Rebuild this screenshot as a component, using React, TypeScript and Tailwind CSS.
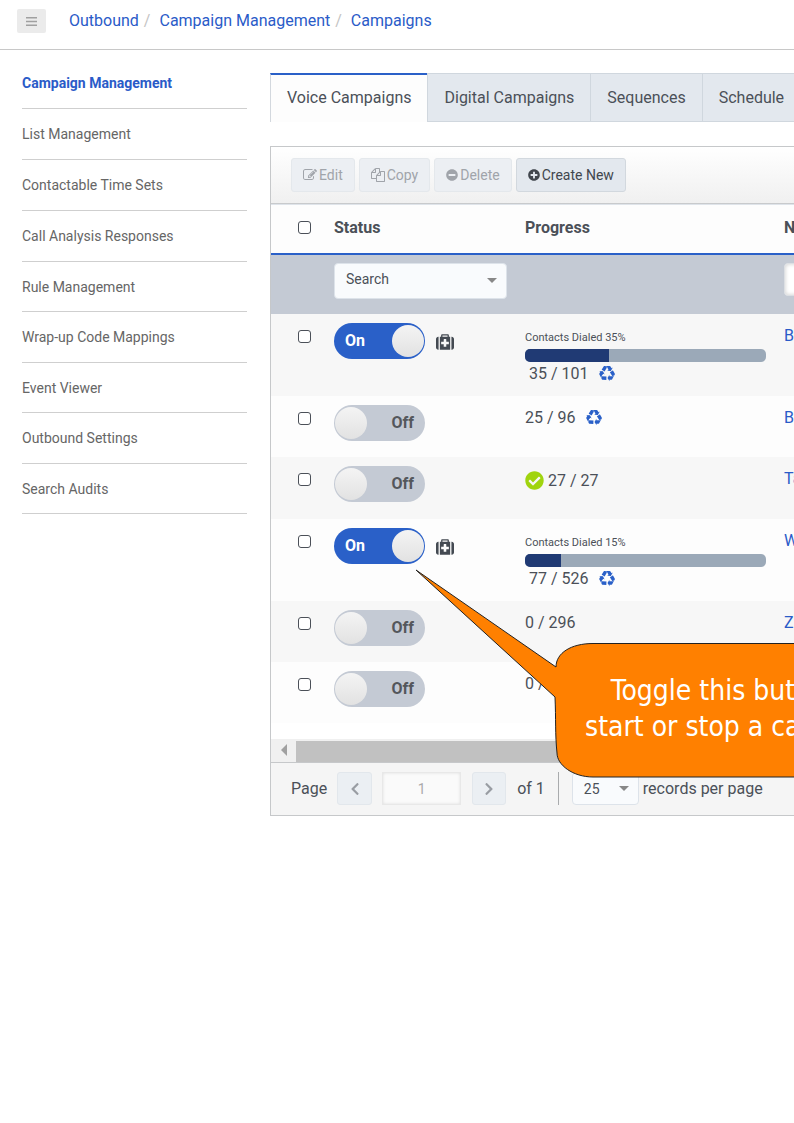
import { useState } from "react";
import {
  FaCheckCircle,
  FaChevronLeft,
  FaChevronRight,
  FaMinusCircle,
  FaPlusCircle,
} from "react-icons/fa";

function EditIcon() {
  return (
    <svg viewBox="0 0 1792 1792" className="size-3.5 shrink-0" fill="currentColor" aria-hidden="true">
      <path d="M888 1184l116-116-152-152-116 116v56h96v96h56zm440-720q-16-16-33 1l-350 350q-17 17-1 33t33-1l350-350q17-17 1-33zm80 594v190q0 119-84.5 203.5t-203.5 84.5h-832q-119 0-203.5-84.5t-84.5-203.5v-832q0-119 84.5-203.5t203.5-84.5h832q63 0 117 25 15 7 18 23 3 17-9 29l-49 49q-14 14-32 8-23-6-45-6h-832q-66 0-113 47t-47 113v832q0 66 47 113t113 47h832q66 0 113-47t47-113v-126q0-13 9-22l64-64q15-15 35-7t20 29zm-96-738l288 288-672 672h-288v-288zm444 132l-92 92-288-288 92-92q28-28 68-28t68 28l152 152q28 28 28 68t-28 68z" />
    </svg>
  );
}

function CopyIcon() {
  return (
    <svg viewBox="0 0 1792 1792" className="size-3.5 shrink-0" fill="currentColor" aria-hidden="true">
      <path d="M1696 384q40 0 68 28t28 68v1216q0 40-28 68t-68 28h-960q-40 0-68-28t-28-68v-288h-544q-40 0-68-28t-28-68v-672q0-40 20-88t48-76l408-408q28-28 76-48t88-20h416q40 0 68 28t28 68v328q68-40 128-40h416zm-544 213l-299 299h299v-299zm-640-384l-299 299h299v-299zm196 647l316-316v-416h-384v416q0 40-28 68t-68 28h-416v640h512v-256q0-40 20-88t48-76zm956 804v-1152h-384v416q0 40-28 68t-68 28h-416v640h896z" />
    </svg>
  );
}

function MedkitIcon() {
  return (
    <svg viewBox="0 0 1792 1792" className="mt-0.5 size-[18px] text-[#444a52]" fill="currentColor" aria-hidden="true">
      <path d="M1280 1088v-192q0-14-9-23t-23-9h-224v-224q0-14-9-23t-23-9h-192q-14 0-23 9t-9 23v224h-224q-14 0-23 9t-9 23v192q0 14 9 23t23 9h224v224q0 14 9 23t23 9h192q14 0 23-9t9-23v-224h224q14 0 23-9t9-23zm-640-704h512v-128h-512v128zm-384 0v1280h-32q-92 0-158-66t-66-158v-832q0-92 66-158t158-66h32zm1152 0v1280h-1024v-1280h128v-160q0-40 28-68t68-28h576q40 0 68 28t28 68v160h128zm384 224v832q0 92-66 158t-158 66h-32v-1280h32q92 0 158 66t66 158z" />
    </svg>
  );
}

function RecycleIcon() {
  return (
    <svg viewBox="0 0 1792 1792" className="size-4 text-[#2a60c8]" fill="currentColor" aria-hidden="true">
      <path d="M836 1169l-15 368-2 22-420-29q-36-3-67-31.5t-47-65.5q-11-27-14.5-55t4-65 12-55 21.5-64 19-53q78 12 509 28zm-387-586l180 379-147-92q-63 72-111.5 144.5t-72.5 125-39.5 94.5-18.5 63l-4 21-190-357q-17-26-18-56t6-47l8-18q35-63 114-188l-140-86zm1231 517l-188 359q-12 29-36.5 46.5t-43.5 20.5l-18 4q-71 7-219 12l8 164-230-367 211-362 7 173q170 16 283 5t170-33zm-785-924q-47 63-265 435l-317-187-19-12 225-356q20-31 60-45t80-10q24 2 48.5 12t42 21 41.5 33 36 34.5 36 39.5 32 35zm655 307l212 363q18 37 12.5 76t-27.5 74q-13 20-33 37t-38 28-48.5 22-47 16-51.5 14-46 12q-34-72-265-436l313-195zm-143-226l142-83-220 373-419-20 151-86q-34-89-75-166t-75.5-123.5-64.5-80-47-46.5l-17-13 405 1q31-3 58 10.5t39 28.5l11 15q39 61 112 190z" />
    </svg>
  );
}

const sideLinks = [
  "Campaign Management",
  "List Management",
  "Contactable Time Sets",
  "Call Analysis Responses",
  "Rule Management",
  "Wrap-up Code Mappings",
  "Event Viewer",
  "Outbound Settings",
  "Search Audits",
];

const tabs = ["Voice Campaigns", "Digital Campaigns", "Sequences", "Schedule"];

type Campaign = {
  on: boolean;
  percent?: number;
  count: string;
  recycle?: boolean;
  done?: boolean;
  name?: string;
};

const campaigns: Campaign[] = [
  { on: true, percent: 35, count: "35 / 101", recycle: true, name: "B" },
  { on: false, count: "25 / 96", recycle: true, name: "B" },
  { on: false, count: "27 / 27", done: true, name: "Ta" },
  { on: true, percent: 15, count: "77 / 526", recycle: true, name: "W" },
  { on: false, count: "0 / 296", name: "Z" },
  { on: false, count: "0 / 1" },
];

function rowHeight(c: Campaign) {
  if (c.percent !== undefined) return "h-[82px]";
  return c.done ? "h-[62px]" : "h-[61px]";
}

function Check({ label }: { label: string }) {
  return (
    <input
      type="checkbox"
      aria-label={label}
      className="block size-[13px] appearance-none rounded-[3px] border border-[#4b5058] bg-white checked:bg-[#2a60c8]"
    />
  );
}

function Toggle({ initial, label }: { initial: boolean; label: string }) {
  const [on, setOn] = useState(initial);
  return (
    <button
      type="button"
      role="switch"
      aria-checked={on}
      aria-label={label}
      onClick={() => setOn(!on)}
      className={
        on
          ? "flex h-9 w-[91px] items-center justify-between rounded-full bg-[#2a60c8] pr-px pl-[11px] text-base font-bold text-white"
          : "flex h-9 w-[91px] flex-row-reverse items-center justify-between rounded-full bg-[#c4cad4] pr-[11px] pl-px text-base font-bold text-[#54575c]"
      }
    >
      <span>{on ? "On" : "Off"}</span>
      <span className="size-8 rounded-full bg-linear-to-b from-[#f4f4f4] to-[#e2e2e2]" />
    </button>
  );
}

function Arrow() {
  return (
    <svg viewBox="0 0 10 5" className="pointer-events-none col-start-1 row-start-1 mr-[10px] h-[5px] w-[10px] self-center justify-self-end" aria-hidden="true">
      <path d="M0 0h10L5 5z" fill="#888" />
    </svg>
  );
}

function Progress({ row }: { row: Campaign }) {
  if (row.percent !== undefined) {
    return (
      <div className="pt-4">
        <div className="text-[11px] leading-4">Contacts Dialed {row.percent}%</div>
        <div className="mt-[3px] h-[13px] w-[241px] overflow-hidden rounded-[5px] bg-[#9ba9b8]">
          <div className="h-full bg-[#203a74]" style={{ width: `${row.percent}%` }} />
        </div>
        <div className="flex items-center gap-2.5 pl-1 leading-6">
          <span>{row.count}</span>
          <RecycleIcon />
        </div>
      </div>
    );
  }
  return (
    <div className={row.done ? "flex items-center gap-1 pt-3 leading-6" : "flex items-center gap-2.5 pt-2.5 leading-6"}>
      {row.done && <FaCheckCircle className="size-[19px] text-[#a0d40e]" />}
      <span>{row.count}</span>
      {row.recycle && <RecycleIcon />}
    </div>
  );
}

export default function App() {
  const toolButton = "flex h-[34px] items-center gap-0.5 rounded-[3px] border px-[11px] text-sm";
  const disabledTool = `${toolButton} border-[#e4e8ec] bg-[#eceff3] text-[#a0a4aa]`;
  return (
    <div className="relative min-h-screen overflow-hidden bg-white font-[Roboto,sans-serif] text-base text-[#4b5058]">
      <header className="flex h-[50px] items-start border-b border-[#c8c8c8] px-[17px] pt-[9px]">
        <button type="button" aria-label="Menu" className="flex h-6 w-[29px] items-center justify-center rounded-[2px] bg-[#ebebeb]">
          <svg viewBox="0 0 11 9" className="h-[9px] w-[11px]" fill="#a0a0a0" aria-hidden="true">
            <path d="M0 0h11v1.6H0zM0 3.7h11v1.6H0zM0 7.4h11v1.6H0z" />
          </svg>
        </button>
        <nav aria-label="Breadcrumb" className="ml-[23px] flex whitespace-nowrap text-[#2a5bc8]">
          <a href="#outbound">Outbound</a>
          <span className="mr-[9px] ml-[5px] text-[#c4c4c4]">/</span>
          <a href="#management">Campaign Management</a>
          <span className="mr-[9px] ml-[5px] text-[#c4c4c4]">/</span>
          <a href="#campaigns">Campaigns</a>
        </nav>
      </header>

      <div className="flex">
        <nav aria-label="Outbound" className="ml-[22px] w-[225px] shrink-0 pt-2">
          <ul>
            {sideLinks.map((l, i) => (
              <li key={l} className="flex h-[51px] items-center border-b border-[#cfcfcf] nth-[2n+5]:h-[50px]">
                <a
                  href="#section"
                  className={i === 0 ? "text-sm font-bold text-[#2a5bc8]" : "text-sm text-[#666]"}
                >
                  {l}
                </a>
              </li>
            ))}
          </ul>
        </nav>

        <main className="ml-[23px] min-w-0 flex-1 pt-[23px]">
          <div role="tablist" className="flex h-[49px] whitespace-nowrap">
            {tabs.map((t, i) => (
              <button
                key={t}
                type="button"
                role="tab"
                aria-selected={i === 0}
                className={
                  i === 0
                    ? "shrink-0 border-t-2 border-l border-t-[#2a60c8] border-l-[#d3d8de] bg-[#fdfdfd] px-4 pb-0.5"
                    : "shrink-0 border-y border-l border-[#d0d7de] bg-[#e3e8ee] px-4"
                }
              >
                {t}
              </button>
            ))}
            <div className="flex-1 border-y border-[#d0d7de] bg-[#e3e8ee]" />
          </div>

          <section className="mt-6 border-y border-l border-[#c6c8ca]">
            <div className="flex h-[57px] items-center gap-1 border-b border-[#c8cacc] bg-linear-to-b from-white to-[#f0f0f0] pl-5 whitespace-nowrap">
              <button type="button" disabled className={disabledTool}>
                <EditIcon />
                Edit
              </button>
              <button type="button" disabled className={disabledTool}>
                <CopyIcon />
                Copy
              </button>
              <button type="button" disabled className={disabledTool}>
                <FaMinusCircle className="size-3" />
                Delete
              </button>
              <button type="button" className={`${toolButton} border-[#d2d8de] bg-[#e3e8ee] text-[#41464d]`}>
                <FaPlusCircle className="size-3" />
                Create New
              </button>
            </div>

            <div className="overflow-hidden pb-4">
              <table className="w-[900px] table-fixed border-collapse text-left">
                <colgroup>
                  <col className="w-[63px]" />
                  <col className="w-[191px]" />
                  <col className="w-[259px]" />
                  <col />
                </colgroup>
                <thead>
                  <tr className="h-[49px] border-t border-b-2 border-t-[#dfe4ea] border-b-[#2a60c8] bg-[#fdfdfd]">
                    <th className="pb-0.5 pl-[27px]"><Check label="Select all" /></th>
                    <th className="pb-0.5 font-bold">Status</th>
                    <th className="pb-0.5 font-bold">Progress</th>
                    <th className="pb-0.5 font-bold">Name</th>
                  </tr>
                  <tr className="h-[60px] bg-[#c4cad4] align-top">
                    <td />
                    <td className="pt-2">
                      <div className="grid w-[173px]">
                        <select aria-label="Filter by status" className="col-start-1 row-start-1 h-9 appearance-none rounded-[4px] border border-[#dde3ea] bg-[#f9fbfd] pb-1 pl-[11px] text-sm">
                          <option>Search</option>
                          <option>On</option>
                          <option>Off</option>
                        </select>
                        <Arrow />
                      </div>
                    </td>
                    <td />
                    <td className="pt-2">
                      <input type="text" aria-label="Filter by name" className="h-[33px] w-[172px] rounded-[4px] border border-[#dcdfe3] bg-white px-2 shadow-[inset_0_0_4px_#ccc]" />
                    </td>
                  </tr>
                </thead>
                <tbody>
                  {campaigns.map((c, i) => (
                    <tr key={i} className={`${rowHeight(c)} align-top odd:bg-[#f7f7f7] even:bg-[#fdfdfd]`}>
                      <td className="pt-4 pl-[27px]"><Check label={`Select campaign ${i + 1}`} /></td>
                      <td className="pt-[9px]">
                        <div className="flex items-center gap-[11px]">
                          <Toggle initial={c.on} label={`Campaign ${i + 1} status`} />
                          {c.on && <MedkitIcon />}
                        </div>
                      </td>
                      <td><Progress row={c} /></td>
                      <td className="pt-2.5 leading-6">
                        {c.name && <a href="#campaign" className="text-[#2a5bc8]">{c.name}</a>}
                      </td>
                    </tr>
                  ))}
                </tbody>
              </table>
            </div>

            <div className="flex h-[23px] bg-[#f0f0f0]">
              <button type="button" aria-label="Scroll left" className="flex w-[25px] items-center justify-center">
                <svg viewBox="0 0 6 12" className="h-3 w-1.5" fill="#a0a0a0" aria-hidden="true">
                  <path d="M6 0v12L0 6z" />
                </svg>
              </button>
              <div className="mt-0.5 flex-1 bg-[#c1c1c1]" />
            </div>

            <footer className="flex h-[53px] items-center border-t border-[#c6c8ca] bg-[#f5f5f5] pl-5 whitespace-nowrap">
              <label htmlFor="page">Page</label>
              <button type="button" aria-label="Previous page" disabled className="ml-2.5 flex h-[33px] w-[35px] items-center justify-center rounded-[3px] border border-[#e2e7ec] bg-[#ebeff3] text-[#999da3]">
                <FaChevronLeft className="size-3.5" />
              </button>
              <input id="page" type="text" defaultValue="1" className="ml-2.5 h-[33px] w-[79px] border border-[#e8e8e8] bg-[#fafafa] text-center text-sm text-[#aaa] shadow-[inset_0_0_3px_#ddd]" />
              <button type="button" aria-label="Next page" disabled className="ml-[11px] flex h-[33px] w-[34px] items-center justify-center rounded-[3px] border border-[#e2e7ec] bg-[#ebeff3] text-[#999da3]">
                <FaChevronRight className="size-3.5" />
              </button>
              <span className="ml-[11px]">of 1</span>
              <span className="mx-[13px] h-[33px] border-l border-[#a9abad]" />
              <div className="grid w-[67px] shrink-0">
                <select id="per-page" className="col-start-1 row-start-1 h-[33px] appearance-none rounded-[4px] border border-[#dde3ea] bg-[#f9fbfd] pl-[11px] text-sm">
                  <option>25</option>
                  <option>50</option>
                </select>
                <Arrow />
              </div>
              <label htmlFor="per-page" className="ml-1">records per page</label>
            </footer>
          </section>
        </main>
      </div>

      <div className="pointer-events-none absolute top-[569px] left-[415px] h-[209px] w-[580px]">
        <svg viewBox="0 0 580 209" className="absolute inset-0 h-full w-full" aria-hidden="true">
          <path
            d="M1 1L141 98C141 84 156 74.5 178 74.5H540C560 74.5 575 86 575 98V185C575 198 560 208 540 208H178C158 208 142 196 142 184C140 165 141 150 140 128Z"
            fill="#ff8000"
            stroke="#222"
            strokeWidth="1"
          />
        </svg>
        <p className="relative ml-[170px] w-max pt-[104px] text-center font-['DejaVu_Sans_Condensed','DejaVu_Sans',sans-serif] text-[28px] leading-9 text-white">
          Toggle this button to
          <br />
          start or stop a campaign
        </p>
      </div>
    </div>
  );
}
